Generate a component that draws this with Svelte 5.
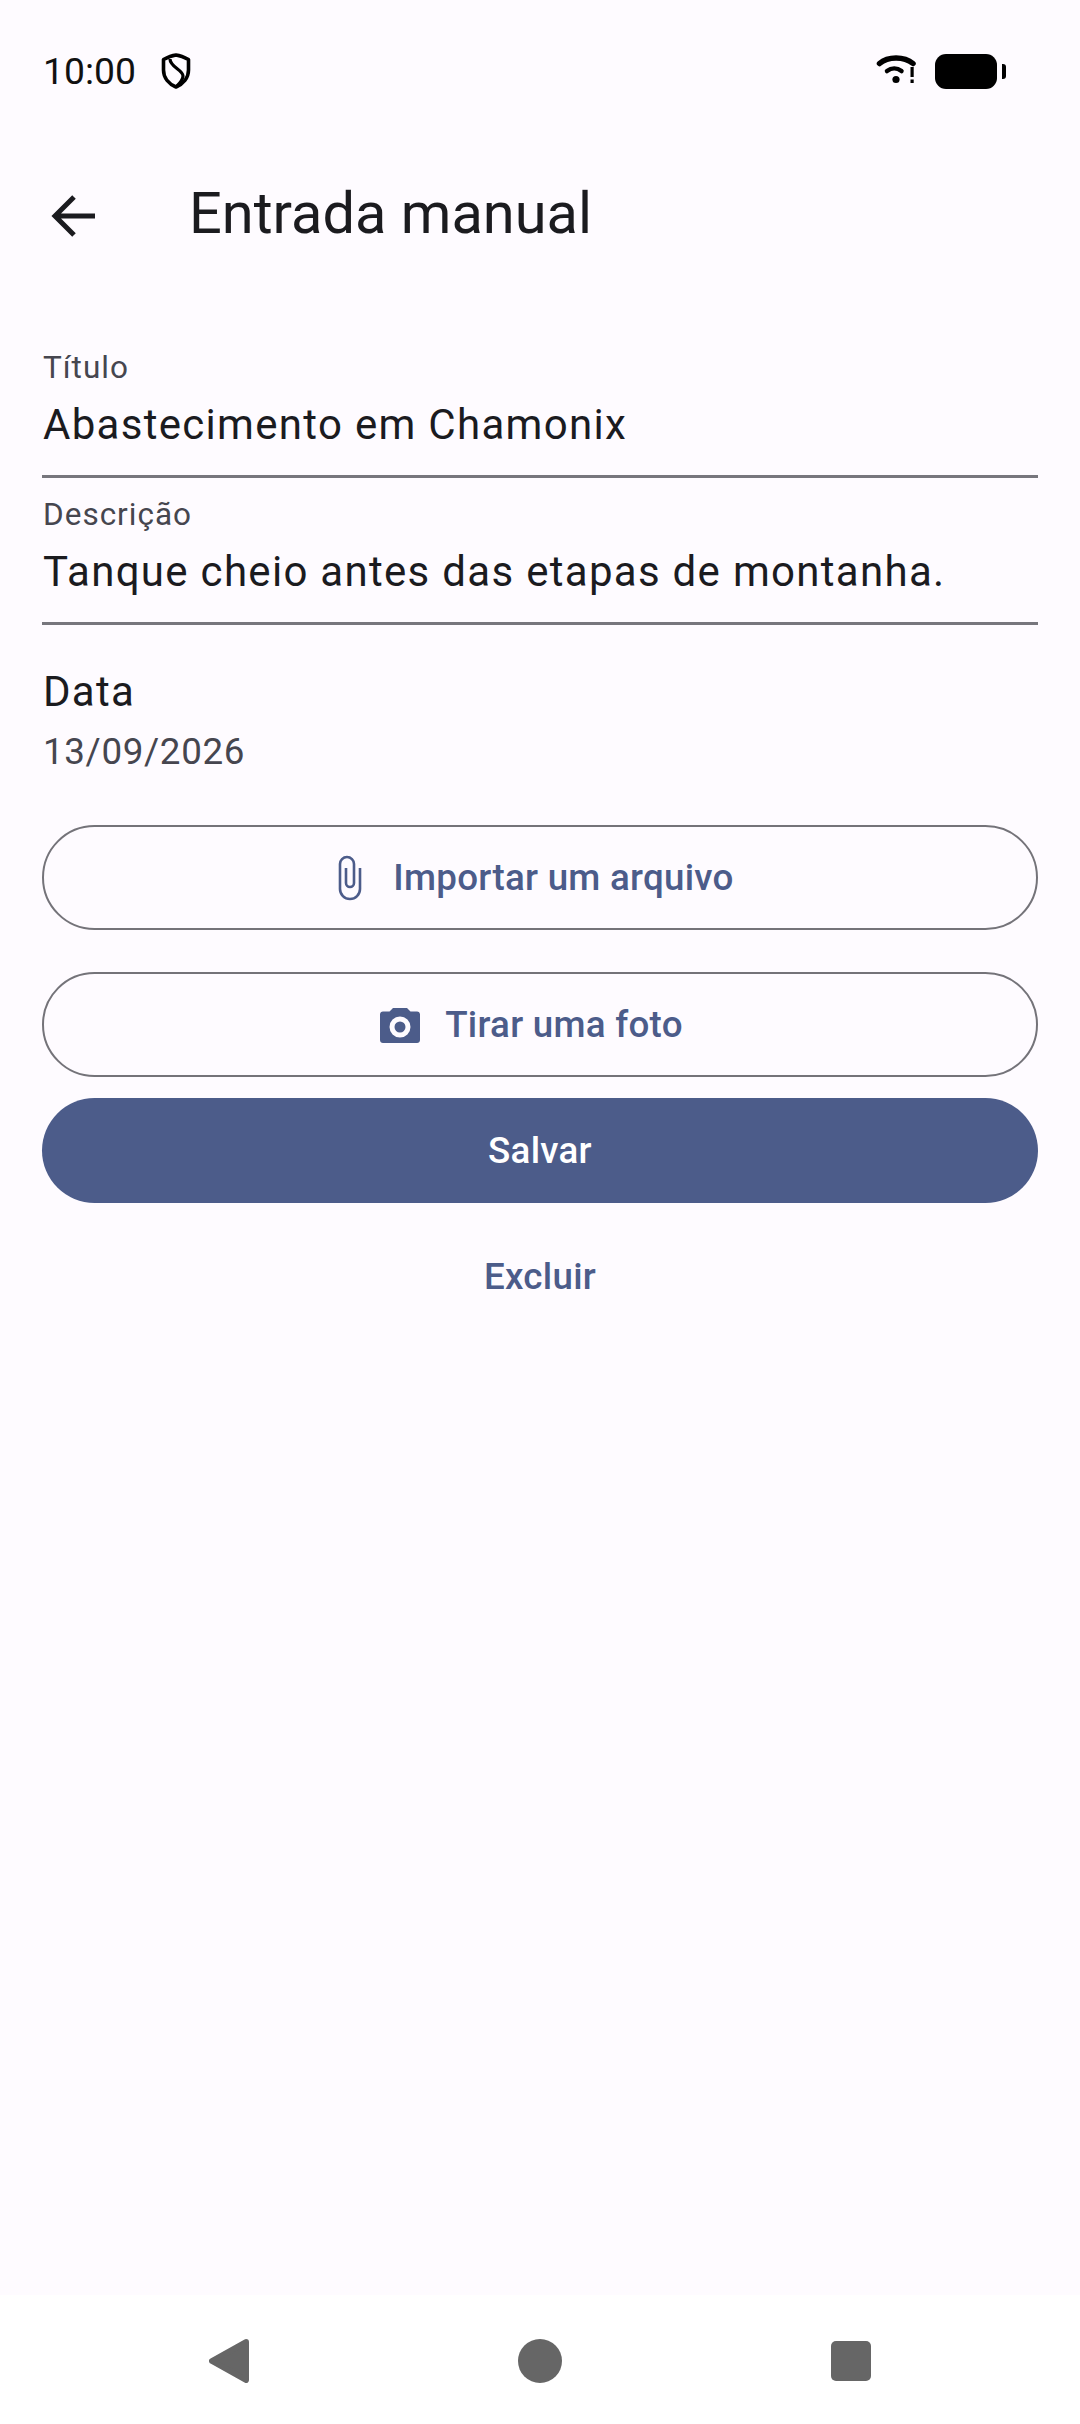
<script lang="ts">
	const fields = [
		{ label: 'Título', value: 'Abastecimento em Chamonix' },
		{ label: 'Descrição', value: 'Tanque cheio antes das etapas de montanha.' }
	];
</script>

<div class="screen">
	<header class="status">
		<div class="status-left">
			<span class="clock">10:00</span>
			<svg viewBox="0 0 30 36" width="30" height="36">
				<path d="M15 2 C19 2.500 23 4 27.500 6.500 V17 C27.500 25 22 31 15 34 C8 31 2.500 25 2.500 17 V6.500 C7 4 11 2.500 15 2 Z" fill="none" stroke="#000" stroke-width="3.600" stroke-linejoin="round" />
				<path d="M9 6 C9 14 22 17 22 23 C22 27 19 30 16 33" fill="none" stroke="#000" stroke-width="3.200" />
			</svg>
		</div>
		<div class="status-right">
			<svg viewBox="0 0 40 34" width="40" height="34">
				<path d="M3.500 9.500 C12 2 28 2 37 9.500" fill="none" stroke="#000" stroke-width="5.500" stroke-linecap="round" />
				<path d="M11 17 C15.500 13.500 21 13.500 25.500 17" fill="none" stroke="#000" stroke-width="4.500" stroke-linecap="round" />
				<circle cx="20" cy="25.500" r="3.600" fill="#000" />
				<rect x="34.500" y="13" width="3.200" height="10" fill="#000" />
				<rect x="34.500" y="25.500" width="3.200" height="3.500" fill="#000" />
			</svg>
			<div class="battery"><span class="battery-body"></span><span class="battery-tip"></span></div>
		</div>
	</header>

	<div class="appbar">
		<svg viewBox="0 0 44 42" width="44" height="42">
			<path d="M45 21 H5 M23 2 L4 21 L23 40" fill="none" stroke="#1b1b1f" stroke-width="5" />
		</svg>
		<h1>Entrada manual</h1>
	</div>

	<main class="form">
		{#each fields as field}
			<div class="field">
				<span class="label">{field.label}</span>
				<span class="value">{field.value}</span>
			</div>
		{/each}

		<div class="date">
			<span class="date-title">Data</span>
			<span class="date-value">13/09/2026</span>
		</div>

		<button class="outlined first">
			<svg viewBox="0 0 24 46" width="24" height="46">
				<path d="M8 13 V28 A4 4 0 0 0 16 28 V9 A7 7 0 0 0 2 9 V34 A10 10 0 0 0 22 34 V13" fill="none" stroke="#4c5c8a" stroke-width="2.600" />
			</svg>
			Importar um arquivo
		</button>
		<button class="outlined second">
			<svg viewBox="0 0 40 36" width="40" height="36">
				<path fill-rule="evenodd" fill="#4c5c8a" d="M13 1 H27 L30.500 4.500 H37 C38.700 4.500 40 5.800 40 7.500 V33 C40 34.700 38.700 36 37 36 H3 C1.300 36 0 34.700 0 33 V7.500 C0 5.800 1.300 4.500 3 4.500 H9.500 Z M20 9.500 A10.500 10.500 0 1 0 20 30.500 A10.500 10.500 0 1 0 20 9.500 Z M20 14.500 A5.500 5.500 0 1 1 20 25.500 A5.500 5.500 0 1 1 20 14.500 Z" />
			</svg>
			Tirar uma foto
		</button>
		<button class="filled">Salvar</button>
		<button class="text">Excluir</button>
	</main>

	<nav class="navbar">
		<svg viewBox="0 0 40 44" width="40" height="44">
			<path d="M37 3 L3 22 L37 41 Z" fill="#666" stroke="#666" stroke-width="6" stroke-linejoin="round" />
		</svg>
		<span class="home"></span>
		<span class="recent"></span>
	</nav>
</div>

<style>
	:global(body) {
		margin: 0;
		background: #fefbff;
	}

	.screen {
		width: 1080px;
		height: 2424px;
		display: flex;
		flex-direction: column;
		font-family: Roboto, sans-serif;
		color: #1b1b1f;
		background: #fefbff;
		overflow: hidden;
	}

	.status {
		height: 142px;
		box-sizing: border-box;
		padding: 48px 74px 0 43px;
		display: flex;
		justify-content: space-between;
		align-items: flex-start;
	}

	.status-left {
		display: flex;
		align-items: center;
		gap: 25px;
		height: 46px;
	}

	.clock {
		font-size: 37.300px;
		line-height: 46px;
		color: #111;
	}

	.status-right {
		display: flex;
		align-items: center;
		gap: 19px;
		height: 46px;
	}

	.battery {
		display: flex;
		align-items: center;
		gap: 5px;
	}

	.battery-body {
		width: 62px;
		height: 35px;
		border-radius: 11px;
		background: #000;
	}

	.battery-tip {
		width: 4px;
		height: 15px;
		background: #000;
		border-radius: 0 3px 3px 0;
	}

	.appbar {
		height: 147px;
		display: flex;
		align-items: center;
		padding-left: 51px;
		gap: 94px;
	}

	.appbar h1 {
		margin: 0 0 6px;
		font-size: 57.750px;
		font-weight: 400;
		line-height: 74px;
	}

	.form {
		flex: 1;
		display: flex;
		flex-direction: column;
		padding: 42px 42px 0;
	}

	.field {
		height: 147px;
		box-sizing: border-box;
		display: flex;
		flex-direction: column;
		padding: 16px 0 0 1px;
		border-bottom: 3px solid #77767d;
	}

	.field .label {
		font-size: 31.500px;
		line-height: 42px;
		letter-spacing: 1px;
		color: #46464f;
	}

	.field .value {
		margin-top: 7px;
		font-size: 42px;
		line-height: 58px;
		letter-spacing: 1.300px;
	}

	.date {
		display: flex;
		flex-direction: column;
		margin-top: 41px;
		padding-left: 1px;
	}

	.date-title {
		font-size: 42px;
		line-height: 52px;
		letter-spacing: 1.300px;
	}

	.date-value {
		margin-top: 10px;
		font-size: 36.750px;
		line-height: 48px;
		letter-spacing: 0.650px;
		color: #46464f;
	}

	button {
		font-family: inherit;
		font-size: 36.750px;
		font-weight: 500;
		letter-spacing: 0.260px;
		color: #4c5c8a;
		display: flex;
		align-items: center;
		justify-content: center;
		height: 105px;
		flex: none;
		background: none;
		border: none;
		padding: 0;
	}

	.outlined {
		box-sizing: border-box;
		border: 2px solid #747379;
		border-radius: 52.500px;
	}

	.first {
		margin-top: 49px;
		gap: 31px;
		padding-right: 8px;
	}

	.second {
		margin-top: 42px;
		gap: 25px;
		padding-right: 17px;
	}

	.filled {
		margin-top: 21px;
		background: #4c5c8a;
		color: #fff;
		border-radius: 52.500px;
	}

	.text {
		margin-top: 21px;
	}

	.navbar {
		height: 129px;
		flex: none;
		display: flex;
		align-items: flex-start;
		justify-content: center;
		gap: 269px;
		padding-top: 44px;
		box-sizing: border-box;
		background: #fff;
	}

	.home {
		width: 44px;
		height: 44px;
		border-radius: 50%;
		background: #666;
	}

	.recent {
		width: 40px;
		height: 40px;
		border-radius: 5px;
		background: #666;
		margin-top: 2px;
	}
</style>
